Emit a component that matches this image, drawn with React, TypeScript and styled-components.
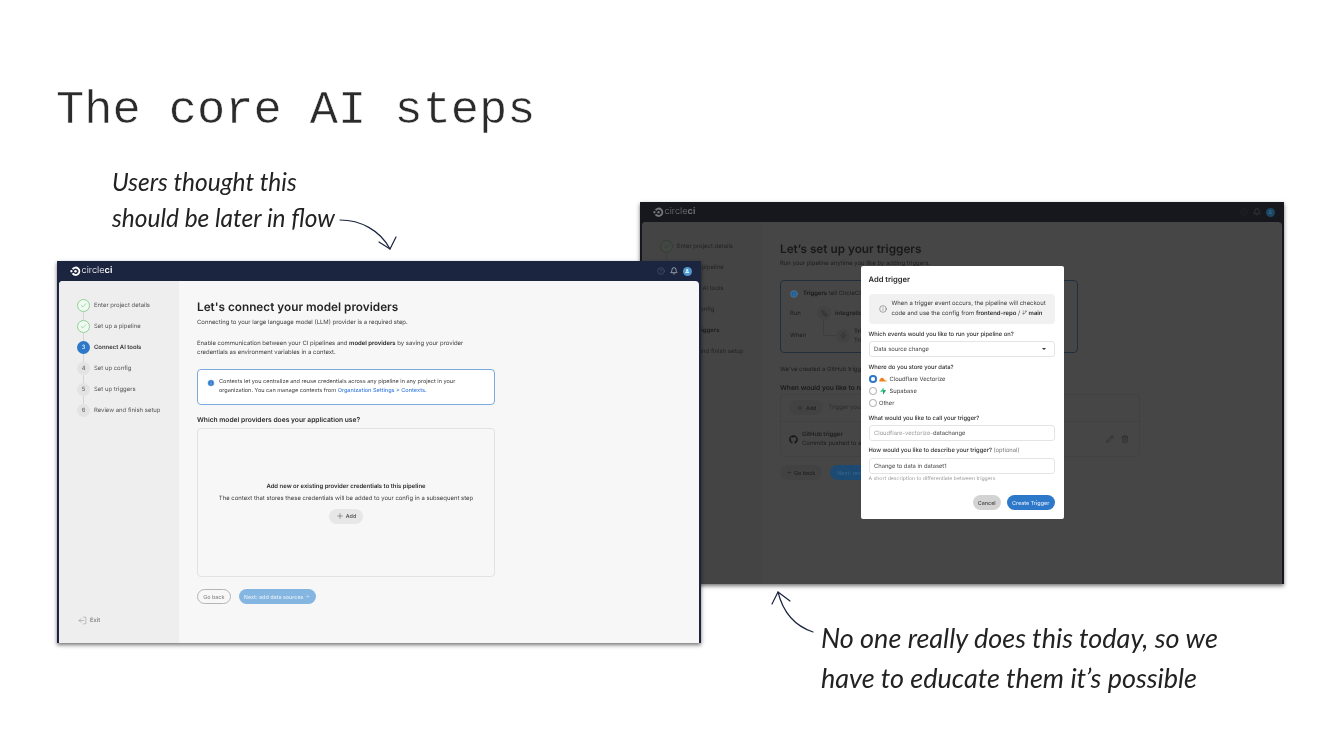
import React from "react";
import styled, { createGlobalStyle } from "styled-components";
import { Bell, Check, CircleHelp, GitBranch, Info, LogOut, Pencil, Plus, Trash2, Zap, ArrowRight, ArrowLeft, Workflow } from "lucide-react";
import { FaGithub, FaUser } from "react-icons/fa";

const GlobalStyle = createGlobalStyle`
  html, body {
    margin: 0;
    padding: 0;
    background: #fff;
  }
  * {
    box-sizing: border-box;
  }
`;

const Slide = styled.div`
  position: relative;
  width: 1340px;
  height: 754px;
  overflow: hidden;
  background: #fff;
  padding: 86px 0 0 56px;
`;

const Title = styled.h1`
  margin: 0;
  font-family: "Liberation Mono", monospace;
  font-weight: 400;
  font-size: 47px;
  line-height: 50px;
  color: #2b2b2b;
  -webkit-text-stroke: 0.5px #fff;
  will-change: transform;
`;

const Note = styled.div<{ $x: number; $y: number; $size: number; $gap: number }>`
  position: absolute;
  left: ${(p) => p.$x}px;
  top: ${(p) => p.$y}px;
  font-family: "Lato", sans-serif;
  font-style: italic;
  font-weight: 400;
  font-size: ${(p) => p.$size}px;
  line-height: ${(p) => p.$gap}px;
  white-space: nowrap;
  color: #222;
  will-change: transform;
`;

const ArrowSvg = styled.svg`
  position: absolute;
  left: 0;
  top: 0;
  pointer-events: none;
`;

const Window = styled.div<{ $x: number; $y: number }>`
  position: absolute;
  left: ${(p) => p.$x}px;
  top: ${(p) => p.$y}px;
  width: 644px;
  height: 382px;
  display: flex;
  flex-direction: column;
  padding: 0 2px;
  background: #1b2540;
  box-shadow: 0 2px 4px rgba(0, 0, 0, 0.55);
  font-family: "Inter", sans-serif;
  color: #3c3c3c;
  font-size: 5.95px;
  line-height: 9px;
  text-rendering: geometricPrecision;
  filter: blur(0.25px);
  will-change: transform;
`;

const TopBar = styled.div`
  height: 20px;
  flex: none;
  display: flex;
  align-items: center;
  justify-content: space-between;
  padding: 0 7px 0 11px;
  color: #fff;
`;

const Logo = styled.div<{ $dim?: boolean }>`
  position: relative;
  z-index: ${(p) => (p.$dim ? 1 : "auto")};
  display: flex;
  align-items: center;
  gap: 1px;
  font-size: 9.2px;
  line-height: 12px;
  font-weight: 300;
  color: ${(p) => (p.$dim ? "#75777b" : "#fff")};
  b {
    font-weight: 600;
  }
`;

const BarIcons = styled.div`
  display: flex;
  align-items: center;
  gap: 5px;
  color: #fff;
`;

const Avatar = styled.div<{ $dim?: boolean }>`
  position: relative;
  z-index: ${(p) => (p.$dim ? 1 : "auto")};
  width: 9px;
  height: 9px;
  border-radius: 50%;
  background: ${(p) => (p.$dim ? "#1c4763" : "#4f97cf")};
  display: flex;
  align-items: center;
  justify-content: center;
  color: ${(p) => (p.$dim ? "#2f5f80" : "#dfeefa")};
`;

const Body = styled.div`
  flex: 1;
  min-height: 0;
  display: flex;
  border-radius: 4px 4px 0 0;
  overflow: hidden;
  background: #f7f7f7;
`;

const Sidebar = styled.aside`
  width: 120px;
  flex: none;
  background: #eeeeee;
  padding: 14px 0 18px 18px;
  display: flex;
  flex-direction: column;
`;

const Step = styled.div`
  position: relative;
  height: 21px;
  display: flex;
  align-items: center;
  gap: 4px;
  color: #555;
  &:not(:nth-child(6))::after {
    content: "";
    position: absolute;
    left: 6.2px;
    top: 17px;
    width: 0.6px;
    height: 8px;
    background: #d5d5d5;
  }
`;

const StepLabel = styled.span<{ $active?: boolean }>`
  font-weight: ${(p) => (p.$active ? 600 : 400)};
  color: ${(p) => (p.$active ? "#333" : "#555")};
`;

const StepMark = styled.span<{ $state: "done" | "active" | "todo" }>`
  width: 13px;
  height: 13px;
  flex: none;
  border-radius: 50%;
  display: flex;
  align-items: center;
  justify-content: center;
  font-size: 5.8px;
  color: ${(p) => (p.$state === "active" ? "#fff" : p.$state === "done" ? "#3f9a52" : "#555")};
  background: ${(p) => (p.$state === "active" ? "#2d78c8" : p.$state === "done" ? "#effaf0" : "#e3e3e3")};
  border: ${(p) => (p.$state === "done" ? "1px solid #8fd09a" : "none")};
`;

const ExitRow = styled.div`
  margin-top: auto;
  display: flex;
  align-items: center;
  gap: 3px;
  padding-left: 1px;
  color: #666;
  svg {
    transform: scaleX(-1);
  }
`;

const Main = styled.main<{ $top: number }>`
  flex: 1;
  min-width: 0;
  padding: ${(p) => p.$top}px 0 0 18px;
`;

const Column = styled.div`
  width: 298px;
`;

const Heading = styled.h2`
  margin: 0;
  font-size: 11.77px;
  line-height: 14px;
  font-weight: 600;
  color: #242424;
`;

const Para = styled.p<{ $top: number }>`
  margin: ${(p) => p.$top}px 0 0;
  b {
    font-weight: 600;
    color: #242424;
  }
`;

const InfoBox = styled.div`
  margin-top: 12px;
  height: 35.5px;
  display: flex;
  align-items: center;
  gap: 4px;
  padding: 0 9px;
  background: #fff;
  border: 1px solid #7aa9dc;
  border-radius: 4px;
  font-size: 5.55px;
  a {
    color: #3f7fe0;
    font-weight: 500;
  }
  svg {
    align-self: flex-start;
    margin-top: 8.5px;
    flex: none;
  }
`;

const FieldTitle = styled.div<{ $top: number }>`
  margin-top: ${(p) => p.$top}px;
  font-size: 6.69px;
  font-weight: 600;
  color: #2c2c2c;
`;

const DropBox = styled.div`
  margin-top: 3px;
  height: 149px;
  border: 1px solid #e2e2e2;
  border-radius: 4px;
  display: flex;
  flex-direction: column;
  align-items: center;
  justify-content: center;
  strong {
    font-weight: 600;
    color: #2c2c2c;
  }
  p {
    margin: 3px 0 6px;
  }
`;

const ButtonRow = styled.div<{ $top: number }>`
  margin-top: ${(p) => p.$top}px;
  display: flex;
  align-items: center;
  gap: 8px;
`;

const Pill = styled.button<{ $kind: "outline" | "soft" | "primary" | "muted" | "grey" | "dim"; $wide?: boolean }>`
  position: relative;
  z-index: ${(p) => (p.$kind === "dim" ? 1 : "auto")};
  height: 15px;
  padding: 0 ${(p) => (p.$wide ? 7 : 5.2)}px;
  border-radius: 8px;
  font-family: inherit;
  font-size: 5.4px;
  font-weight: 500;
  display: inline-flex;
  align-items: center;
  gap: 2px;
  white-space: nowrap;
  border: ${(p) => (p.$kind === "outline" ? "0.6px solid #b5b5b5" : "none")};
  background: ${(p) =>
    p.$kind === "outline"
      ? "transparent"
      : p.$kind === "muted"
        ? "#85b6e1"
        : p.$kind === "primary"
          ? "#2d78c8"
          : p.$kind === "dim"
            ? "#1c4a72"
            : p.$kind === "grey"
              ? "#d3d3d3"
              : "#e7e7e7"};
  color: ${(p) =>
    p.$kind === "outline"
      ? "#8c8c8c"
      : p.$kind === "muted"
        ? "#e2edf7"
        : p.$kind === "primary"
          ? "#dfeafa"
          : p.$kind === "dim"
            ? "#33648f"
            : "#444"};
`;

const Overlay = styled.div`
  position: absolute;
  inset: 0;
  background: rgba(22, 22, 22, 0.79);
  display: flex;
  align-items: center;
  justify-content: center;
`;

const Modal = styled.div`
  position: relative;
  z-index: 2;
  width: 203px;
  height: 253px;
  margin-top: -1px;
  background: #fff;
  border-radius: 2px;
  padding: 9px 9px 0 8px;
  font-size: 5.8px;
`;

const ModalTitle = styled.div`
  font-size: 7.6px;
  line-height: 10px;
  font-weight: 600;
  color: #2a2a2a;
`;

const Notice = styled.div`
  margin-top: 9px;
  height: 30px;
  display: flex;
  align-items: center;
  gap: 5px;
  padding-left: 10px;
  background: #f1f1f1;
  border-radius: 4px;
  line-height: 10px;
  font-size: 5.95px;
  b {
    font-weight: 600;
    color: #2c2c2c;
  }
  svg {
    flex: none;
  }
`;

const FieldLabel = styled.div<{ $top: number }>`
  margin-top: ${(p) => p.$top}px;
  font-weight: 500;
  color: #2c2c2c;
  span {
    font-weight: 400;
    color: #777;
  }
`;

const Field = styled.div<{ $top: number }>`
  margin-top: ${(p) => p.$top}px;
  height: 16px;
  display: flex;
  align-items: center;
  justify-content: space-between;
  padding: 0 4.5px;
  border: 0.7px solid #e4e4e4;
  border-radius: 3px;
  background: #fff;
  color: #444;
  i {
    font-style: normal;
    color: #9a9a9a;
  }
`;

const Caret = styled.span`
  width: 0;
  height: 0;
  margin-right: 3px;
  border-left: 2px solid transparent;
  border-right: 2px solid transparent;
  border-top: 2.5px solid #333;
`;

const RadioGroup = styled.div`
  margin-top: 1.5px;
`;

const RadioRow = styled.div`
  height: 12px;
  display: flex;
  align-items: center;
  gap: 2.5px;
`;

const Radio = styled.span<{ $on?: boolean }>`
  width: 7.5px;
  height: 7.5px;
  flex: none;
  border-radius: 50%;
  background: #fff;
  border: ${(p) => (p.$on ? "2px solid #2d78c8" : "0.6px solid #a8a8a8")};
  margin-left: 0.5px;
`;

const Hint = styled.div`
  margin-top: 0.5px;
  font-size: 5.2px;
  color: #999;
`;

const ModalActions = styled.div`
  margin-top: 11.5px;
  display: flex;
  justify-content: flex-end;
  gap: 6px;
`;

const TriggerCard = styled.div`
  margin-top: 12px;
  height: 73px;
  border: 1px solid #4f8cd0;
  border-radius: 4px;
  padding: 8px 9px;
`;

const CardLine = styled.div`
  display: flex;
  align-items: center;
  gap: 5px;
  b {
    font-weight: 600;
    color: #222;
  }
`;

const CardIcon = styled(Info)`
  position: relative;
  z-index: 1;
  flex: none;
`;

const FlowRow = styled.div<{ $indent: number }>`
  position: relative;
  margin-top: 7.5px;
  height: 15px;
  display: flex;
  align-items: center;
  gap: 4px;
  b {
    font-weight: 600;
  }
  > span:first-child {
    width: ${(p) => p.$indent}px;
    flex: none;
  }
`;

const FlowElbow = styled.span`
  position: absolute;
  left: 33px;
  top: -8px;
  width: 12px;
  height: 15.5px;
  border-left: 0.6px solid #cfcfcf;
  border-bottom: 0.6px solid #cfcfcf;
  border-radius: 0 0 0 3px;
`;

const RoundIcon = styled.span`
  position: relative;
  width: 14px;
  height: 14px;
  flex: none;
  border-radius: 50%;
  background: #e6e6e6;
  display: flex;
  align-items: center;
  justify-content: center;
`;

const TriggerList = styled.div`
  margin-top: 1px;
  width: 360px;
  height: 63px;
  border: 1px solid #e2e2e2;
  border-radius: 4px;
`;

const ListTop = styled.div`
  height: 27px;
  display: flex;
  align-items: center;
  gap: 5px;
  padding-left: 8px;
  color: #888;
  border-bottom: 0.6px solid #e2e2e2;
`;

const ListItem = styled.div`
  height: 35px;
  display: flex;
  align-items: center;
  gap: 4px;
  padding: 0 10px 0 8px;
  strong {
    display: block;
    font-weight: 600;
  }
`;

const ItemActions = styled.div`
  margin-left: auto;
  display: flex;
  gap: 7px;
  color: #222;
`;

const CircleCiMark = ({ size }: { size: number }) => (
  <svg width={size} height={size} viewBox="0 0 24 24">
    <path d="M4 6.2A10.6 10.6 0 1 1 4 17.8L8.3 15.4A5.9 5.9 0 1 0 8.3 8.6Z" fill="currentColor" />
    <circle cx="12.6" cy="12" r="2.8" fill="currentColor" />
    <circle cx="3.2" cy="12" r="2.6" fill="currentColor" />
  </svg>
);

const CloudflareIcon = () => (
  <svg width="8" height="5" viewBox="0 0 18 10">
    <path d="M1 9.5h13.6c.5-2-.6-3.4-2.6-3.4-.3-3-2.4-5.3-5-5.3-2 0-3.6 1.2-4.3 3.2C1.500 4.400 .4 6 1 9.500Z" fill="#f38020" />
    <path d="M14 9.500h3.500c.4-1.500-.5-3-2.300-3-.4 0-.8 0-1.100.2.300 1 .2 1.900-.1 2.800Z" fill="#faae40" />
  </svg>
);

const SupabaseIcon = () => (
  <svg width="8" height="8" viewBox="0 0 16 16">
    <path d="M9 1 2 9.500h6V15l6-8.500H9Z" fill="#3ecf8e" />
    <path d="M9 1v5.500h5L8 15V9.500Z" fill="#2c9c6a" />
  </svg>
);

const HeaderBar = ({ dim }: { dim?: boolean }) => (
  <TopBar>
    <Logo $dim={dim}>
      <CircleCiMark size={10.5} />
      <span>
        circle<b>ci</b>
      </span>
    </Logo>
    <BarIcons>
      <CircleHelp size={8} strokeWidth={1.2} color="#6c7488" />
      <Bell size={8} strokeWidth={1.6} />
      <Avatar $dim={dim}>
        <FaUser size={4.5} />
      </Avatar>
    </BarIcons>
  </TopBar>
);

const stepNames = [
  "Enter project details",
  "Set up a pipeline",
  "Connect AI tools",
  "Set up config",
  "Set up triggers",
  "Review and finish setup",
];

const Steps = ({ current }: { current: number }) => (
  <>
    {stepNames.map((name, i) => {
      const state = i < 2 ? "done" : i === current ? "active" : "todo";
      return (
        <Step key={name}>
          <StepMark $state={state}>{state === "done" ? <Check size={7} strokeWidth={1.4} /> : i + 1}</StepMark>
          <StepLabel $active={i === current}>{name}</StepLabel>
        </Step>
      );
    })}
  </>
);

const ExitLink = () => (
  <ExitRow>
    <LogOut size={9} strokeWidth={1} />
    Exit
  </ExitRow>
);

const App: React.FC = () => {
  return (
    <Slide>
      <GlobalStyle />
      <Title>The core AI steps</Title>

      <Note $x={112} $y={164} $size={24.5} $gap={36}>
        Users thought this
        <br />
        should be later in flow
      </Note>

      <Window $x={640} $y={202}>
        <HeaderBar dim />
        <Body>
          <Sidebar>
            <Steps current={4} />
            <ExitLink />
          </Sidebar>
          <Main $top={20}>
            <Column>
              <Heading>Let’s set up your triggers</Heading>
              <Para $top={3}>Run your pipeline anytime you like by adding triggers.</Para>
              <TriggerCard>
                <CardLine>
                  <CardIcon size={8} fill="#1c5f96" color="#6f8ea8" strokeWidth={1.5} />
                  <span>
                    <b>Triggers</b> tell CircleCI when to run your pipeline.
                  </span>
                </CardLine>
                <FlowRow $indent={23}>
                  <span>Run</span>
                  <RoundIcon>
                    <Workflow size={7} strokeWidth={1.2} />
                  </RoundIcon>
                  <b>integration-tests</b>
                </FlowRow>
                <FlowRow $indent={42}>
                  <span>When</span>
                  <FlowElbow />
                  <RoundIcon>
                    <Zap size={7} strokeWidth={1.2} />
                  </RoundIcon>
                  <span>
                    <b>Trigger event</b>
                    <br />
                    Trigger description
                  </span>
                </FlowRow>
              </TriggerCard>
              <Para $top={12}>We've created a GitHub trigger for you.</Para>
              <FieldTitle $top={9.5}>When would you like to run your pipeline?</FieldTitle>
              <TriggerList>
                <ListTop>
                  <Pill $kind="soft" $wide>
                    <Plus size={8} strokeWidth={1.4} />
                    Add
                  </Pill>
                  Trigger your pipeline on other events
                </ListTop>
                <ListItem>
                  <FaGithub size={9} color="#222" />
                  <div>
                    <strong>GitHub trigger</strong>
                    Commits pushed to a branch
                  </div>
                  <ItemActions>
                    <Pencil size={8} strokeWidth={1.2} />
                    <Trash2 size={8} strokeWidth={1.2} />
                  </ItemActions>
                </ListItem>
              </TriggerList>
              <ButtonRow $top={8.5}>
                <Pill $kind="soft" $wide>
                  <ArrowLeft size={5} />
                  Go back
                </Pill>
                <Pill $kind="dim" $wide>
                  Next: review and finish setup
                </Pill>
              </ButtonRow>
            </Column>
          </Main>
        </Body>
        <Overlay>
          <Modal>
            <ModalTitle>Add trigger</ModalTitle>
            <Notice>
              <Info size={8} strokeWidth={1.2} color="#333" />
              <span>
                When a trigger event occurs, the pipeline will checkout
                <br />
                code and use the config from <b>frontend-repo</b> / <GitBranch size={5} strokeWidth={1.5} /> <b>main</b>
              </span>
            </Notice>
            <FieldLabel $top={6}>Which events would you like to run your pipeline on?</FieldLabel>
            <Field $top={2}>
              Data source change
              <Caret />
            </Field>
            <FieldLabel $top={5.5}>Where do you store your data?</FieldLabel>
            <RadioGroup>
              <RadioRow>
                <Radio $on />
                <CloudflareIcon />
                Cloudflare Vectorize
              </RadioRow>
              <RadioRow>
                <Radio />
                <SupabaseIcon />
                Supabase
              </RadioRow>
              <RadioRow>
                <Radio />
                Other
              </RadioRow>
            </RadioGroup>
            <FieldLabel $top={4.5}>What would you like to call your trigger?</FieldLabel>
            <Field $top={2.5}>
              <span>
                <i>Cloudflare-vectorize-</i>datachange
              </span>
            </Field>
            <FieldLabel $top={4.5}>
              How would you like to describe your trigger? <span>(optional)</span>
            </FieldLabel>
            <Field $top={3.5}>Change to data in dataset1</Field>
            <Hint>A short description to differentiate between triggers</Hint>
            <ModalActions>
              <Pill $kind="grey">Cancel</Pill>
              <Pill $kind="primary">Create Trigger</Pill>
            </ModalActions>
          </Modal>
        </Overlay>
      </Window>

      <Window $x={57} $y={261}>
        <HeaderBar />
        <Body>
          <Sidebar>
            <Steps current={2} />
            <ExitLink />
          </Sidebar>
          <Main $top={19}>
            <Column>
              <Heading>Let's connect your model providers</Heading>
              <Para $top={4}>Connecting to your large language model (LLM) provider is a required step.</Para>
              <Para $top={12}>
                Enable communication between your CI pipelines and <b>model providers</b> by saving your provider
                <br />
                credentials as environment variables in a context.
              </Para>
              <InfoBox>
                <Info size={8} fill="#2d78c8" color="#fff" strokeWidth={1.5} />
                <span>
                  Contexts let you centralize and reuse credentials across any pipeline in any project in your
                  <br />
                  organization. You can manage contexts from <a>Organization Settings &gt; Contexts.</a>
                </span>
              </InfoBox>
              <FieldTitle $top={11.5}>Which model providers does your application use?</FieldTitle>
              <DropBox>
                <strong>Add new or existing provider credentials to this pipeline</strong>
                <p>The context that stores these credentials will be added to your config in a subsequent step</p>
                <Pill $kind="soft" $wide>
                  <Plus size={8} strokeWidth={1.4} />
                  Add
                </Pill>
              </DropBox>
              <ButtonRow $top={12}>
                <Pill $kind="outline">Go back</Pill>
                <Pill $kind="muted">
                  Next: add data sources
                  <ArrowRight size={5} />
                </Pill>
              </ButtonRow>
            </Column>
          </Main>
        </Body>
      </Window>

      <ArrowSvg width="1340" height="754" fill="none" stroke="#1b2540" strokeWidth="1.2" strokeLinecap="round" strokeLinejoin="round">
        <path d="M340 220C360 220 380 230 390 249" />
        <path d="M379 242L390 249L396 237" />
        <path d="M813 632C795 626 783 612 778 592" />
        <path d="M772 604L778 592L790 601" />
      </ArrowSvg>

      <Note $x={821} $y={618} $size={27} $gap={40}>
        No one really does this today, so we
        <br />
        have to educate them it’s possible
      </Note>
    </Slide>
  );
};

export default App;
